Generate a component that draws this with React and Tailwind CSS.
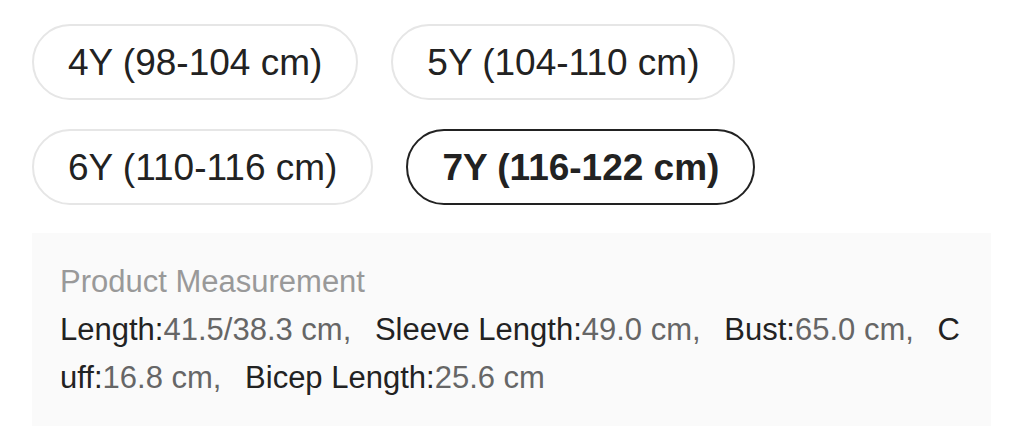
import { useState } from 'react'

const sizes = ['4Y (98-104 cm)', '5Y (104-110 cm)', '6Y (110-116 cm)', '7Y (116-122 cm)']

const measures = [
  ['Length', '41.5/38.3 cm'],
  ['Sleeve Length', '49.0 cm'],
  ['Bust', '65.0 cm'],
  ['Cuff', '16.8 cm'],
  ['Bicep Length', '25.6 cm'],
]

export default function App() {
  const [selected, setSelected] = useState(3)

  return (
    <div className="w-[1024px] h-[430px] bg-white pt-[24px] pl-[32px] font-['Liberation_Sans',Arial,sans-serif] text-[#222]">
      <div className="flex flex-wrap gap-x-[33px] gap-y-[29px] w-[780px]">
        {sizes.map((s, i) => {
          const active = i === selected
          return (
            <button
              key={s}
              onClick={() => setSelected(i)}
              className={`h-[76px] px-[34px] flex items-center rounded-full border-2 text-[37px] leading-none ${active ? 'border-[#222] font-bold' : 'border-[#e6e6e6]'}`}
            >
              {s}
            </button>
          )
        })}
      </div>

      <div className="mt-[28px] w-[959px] bg-[#fafafa] pt-[25px] pb-[24px] pl-[28px] pr-[26px] text-[31px] leading-[48px] break-all">
        <div className="text-[#999]">Product Measurement</div>
        <div>
          {measures.map(([label, value], i) => (
            <span key={label}>
              <span className="text-[#222]">{label}:</span>
              <span className="text-[#666]">{value}</span>
              {i < measures.length - 1 && <span className="text-[#666] mr-[15px]">,</span>}
              {i < measures.length - 1 && ' '}
            </span>
          ))}
        </div>
      </div>
    </div>
  )
}
